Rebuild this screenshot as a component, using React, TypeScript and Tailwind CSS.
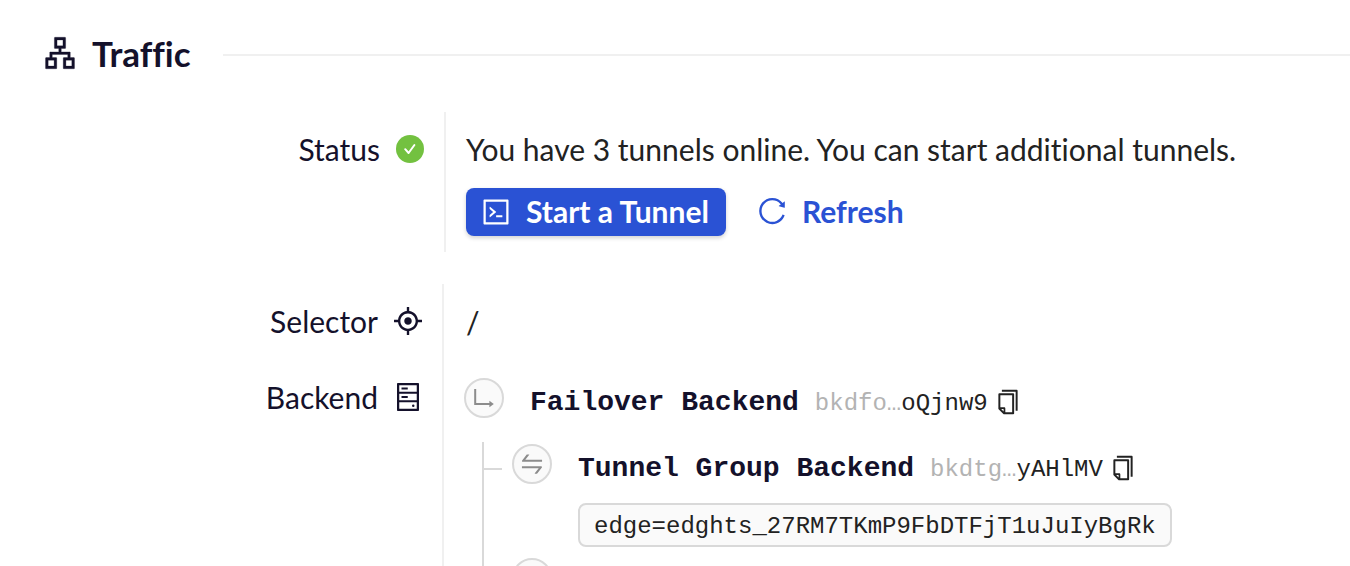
import type { ReactNode } from 'react';
import {
  AiOutlineAim,
  AiOutlineApartment,
  AiOutlineCode,
  AiOutlineCopy,
  AiOutlineHdd,
  AiOutlineReload,
  AiOutlineSwap,
} from 'react-icons/ai';

function CheckBadge() {
  return (
    <svg viewBox="0 0 32 32" className="size-8 shrink-0" aria-hidden="true">
      <circle cx="16" cy="16" r="14" fill="#73c140" />
      <path d="M11.2 16.2l3.4 3.8 5.8-8" fill="none" stroke="#fff" strokeWidth="2" strokeLinecap="round" strokeLinejoin="round" />
    </svg>
  );
}

function BranchIcon() {
  return (
    <svg viewBox="0 0 20 20" className="size-5" aria-hidden="true">
      <path d="M1.2 1v15H16" fill="none" stroke="#8c8c8c" strokeWidth="2" />
      <path d="M15.4 12.8l4.4 3.2-4.4 3.2z" fill="#8c8c8c" />
    </svg>
  );
}

function Node({ children }: { children?: ReactNode }) {
  return (
    <span className="flex size-10 shrink-0 items-center justify-center rounded-full border-2 border-[#d9d9d9] bg-[#fafafa] text-[#8c8c8c]">
      {children}
    </span>
  );
}

function BackendTitle({ name, muted, id }: { name: string; muted: string; id: string }) {
  return (
    <div className="flex h-10 items-center font-['Liberation_Mono',monospace] text-2xl text-[#222]">
      <div className="flex items-baseline pt-0.5">
        <h3 className="mr-4 text-[28px] font-bold text-[#14112b]">{name}</h3>
        <span className="text-[#b3b3b3]">{muted}</span>
        <span>{id}</span>
      </div>
      <button type="button" aria-label={`Copy ${name} ID`} className="ml-1.5">
        <AiOutlineCopy className="size-7" />
      </button>
    </div>
  );
}

function Label({ text, icon }: { text: string; icon: ReactNode }) {
  return (
    <div className="flex items-center justify-end gap-[14px] text-[#14112b]">
      <span>{text}</span>
      {icon}
    </div>
  );
}

export default function App() {
  return (
    <main className="overflow-hidden bg-white font-[Lato,sans-serif] text-[30px] leading-10 text-[#222] [font-variant-ligatures:none]">
      <header className="flex items-center gap-8 pt-[34px] pl-[42px]">
        <h2 className="flex h-[42px] items-center gap-[14px] pb-1 text-[35px] font-bold text-[#14112b]">
          <AiOutlineApartment className="size-9 [stroke-width:8]" />
          Traffic
        </h2>
        <div className="h-0.5 flex-1 bg-[#f0f0f0]" />
      </header>

      <section className="mt-9 flex">
        <div className="w-[446px] shrink-0 border-r-2 border-[#f0f0f0] pt-[17px] pr-[18px]">
          <Label text="Status" icon={<CheckBadge />} />
        </div>
        <div className="h-[140px] pt-[17px] pl-5">
          <p className="whitespace-nowrap">You have 3 tunnels online. You can start additional tunnels.</p>
          <div className="mt-[19px] flex items-center gap-[30px] font-bold">
            <button type="button" className="flex h-12 items-center gap-[14px] rounded-lg bg-[#2a52d4] pr-[17px] pl-[14px] text-white shadow-[0_2px_4px_rgba(0,0,0,0.18)]">
              <AiOutlineCode className="size-8" />
              <span className="pb-0.5">Start a Tunnel</span>
            </button>
            <button type="button" className="flex h-12 items-center gap-[14px] pb-0.5 text-[#2a52d4]">
              <AiOutlineReload className="size-8" />
              Refresh
            </button>
          </div>
        </div>
      </section>

      <section className="mt-8 flex h-[282px]">
        <div className="w-[444px] shrink-0 border-r-2 border-[#f0f0f0] pt-[17px] pr-[18px]">
          <div className="flex flex-col gap-9">
            <Label text="Selector" icon={<AiOutlineAim className="size-8" />} />
            <Label text="Backend" icon={<AiOutlineHdd className="size-8" />} />
          </div>
        </div>
        <div className="pt-[18px] pl-5">
          <p className="pl-0.5">/</p>
          <div className="mt-9 flex items-start gap-[26px]">
            <Node><BranchIcon /></Node>
            <div className="pt-1"><BackendTitle name="Failover Backend" muted="bkdfo…" id="oQjnw9" /></div>
          </div>
          <div className="mt-5 ml-[18px] flex h-32 border-l-2 border-[#d9d9d9]">
            <div className="mt-[26px] mr-[10px] h-0.5 w-[18px] bg-[#d9d9d9]" />
            <div>
              <div className="mt-0.5 flex items-start gap-[26px]">
                <Node><AiOutlineSwap className="size-7" /></Node>
                <div className="pt-1">
                  <BackendTitle name="Tunnel Group Backend" muted="bkdtg…" id="yAHlMV" />
                  <code className="mt-[15px] flex h-11 items-center rounded-lg border-2 border-[#d9d9d9] bg-[#fafafa] px-[14px] pt-1 font-['Liberation_Mono',monospace] text-2xl">
                    edge=edghts_27RM7TKmP9FbDTFjT1uJuIyBgRk
                  </code>
                </div>
              </div>
              <div className="mt-[11px]"><Node /></div>
            </div>
          </div>
        </div>
      </section>
    </main>
  );
}
